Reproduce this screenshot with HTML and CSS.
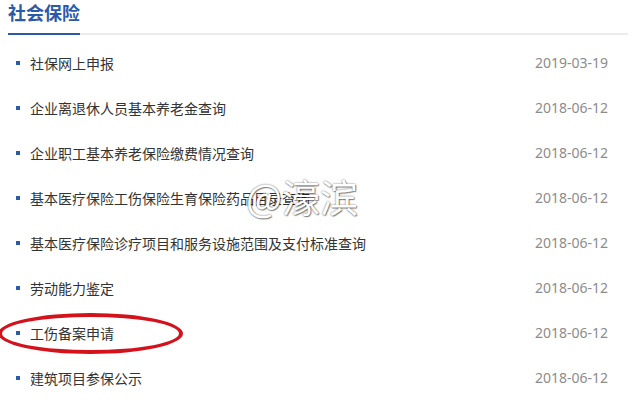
FILE: index.html
```html
<!DOCTYPE html>
<html lang="zh-CN">
<head>
    <meta charset="UTF-8">
    <meta name="viewport" content="width=device-width, initial-scale=1.0">
    <link rel="stylesheet" href="styles.css">
    <title>社会保险</title>
</head>
<body>
    <div class="panel">
        <div class="panel-head">
            <h2>社会保险</h2>
        </div>
        <ul class="news-list">
            <li><span class="title">社保网上申报</span><span class="date">2019-03-19</span></li>
            <li><span class="title">企业离退休人员基本养老金查询</span><span class="date">2018-06-12</span></li>
            <li><span class="title">企业职工基本养老保险缴费情况查询</span><span class="date">2018-06-12</span></li>
            <li><span class="title">基本医疗保险工伤保险生育保险药品目录查询</span><span class="date">2018-06-12</span></li>
            <li><span class="title">基本医疗保险诊疗项目和服务设施范围及支付标准查询</span><span class="date">2018-06-12</span></li>
            <li><span class="title">劳动能力鉴定</span><span class="date">2018-06-12</span></li>
            <li><span class="title">工伤备案申请</span><span class="date">2018-06-12</span></li>
            <li><span class="title">建筑项目参保公示</span><span class="date">2018-06-12</span></li>
        </ul>

        <!-- marks drawn on top of the screenshot -->
        <div class="circle-mark"></div>
        <div class="watermark">@濠滨</div>
    </div>
</body>
</html>
```

FILE: styles.css
```css
body {
    margin: 0;
    background-color: white;
    font-family: "Noto Sans CJK SC", "Noto Sans", sans-serif;
    overflow: hidden;
}

.panel {
    position: relative;
    width: 620px;
    margin-left: 8px;
    height: 400px;
}

.panel-head {
    border-bottom: 2px solid #ececec;
}

.panel-head h2 {
    display: inline-block;
    margin: 0 0 -2px 0;
    padding-bottom: 8px;
    font-size: 18px;
    line-height: 25px;
    font-weight: bold;
    color: #2b5aa6;
    border-bottom: 2px solid #2b5aa6;
}

.news-list {
    list-style: none;
    margin: 0;
    padding: 5px 20px 0 0;
}

.news-list li {
    display: flex;
    justify-content: space-between;
    align-items: center;
    height: 45px;
    font-size: 14px;
}

.news-list .title {
    display: flex;
    align-items: center;
    color: #333;
}

.news-list .title::before {
    content: "";
    width: 4px;
    height: 4px;
    margin: 0 10px 0 8px;
    background-color: #2b5aa6;
}

.news-list .date {
    font-family: "Noto Sans", sans-serif;
    color: #8c8c8c;
}

.circle-mark {
    position: absolute;
    left: -10px;
    top: 313px;
    width: 177px;
    height: 33px;
    border: 4px solid #d3121c;
    border-radius: 50%;
}

.watermark {
    position: absolute;
    left: 238px;
    top: 172px;
    font-size: 38px;
    line-height: 48px;
    color: white;
    text-shadow: 0 0 2px rgba(0, 0, 0, 0.6), 1px 1px 1px rgba(0, 0, 0, 0.4);
}
```
